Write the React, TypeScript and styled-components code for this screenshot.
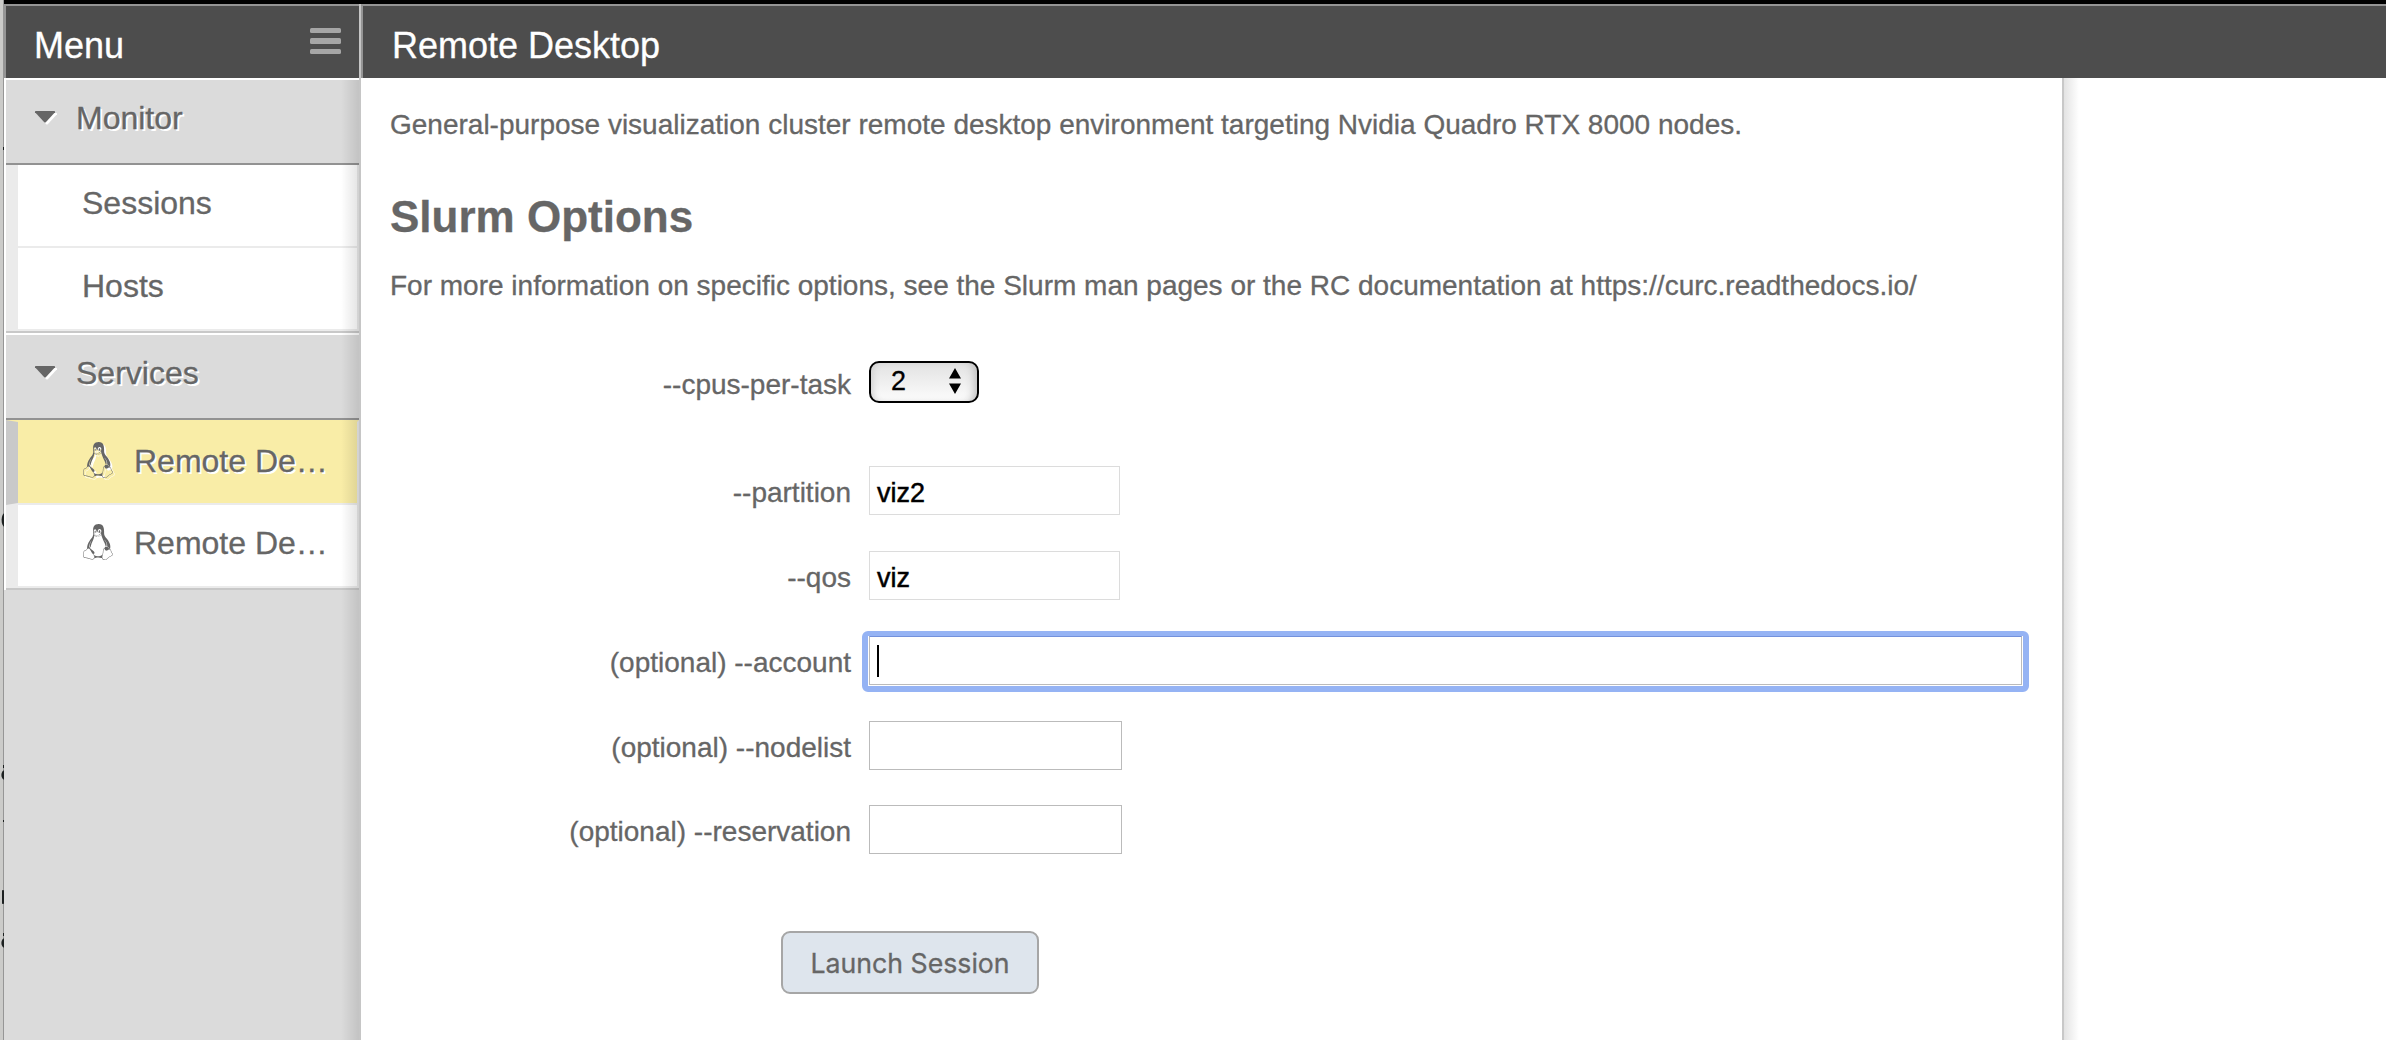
import React from "react";
import styled, { createGlobalStyle, css } from "styled-components";
import { FaLinux } from "react-icons/fa";

const GlobalStyle = createGlobalStyle`
  * { box-sizing: border-box; }
  body {
    margin: 0;
    background: #fff;
    color: #666;
    font-family: "Liberation Sans", Arial, sans-serif;
    -webkit-text-stroke: 0.3px currentColor;
  }
`;

const Page = styled.div`
  display: flex;
  width: 2386px;
  height: 1040px;
  overflow: hidden;
  background: #fff;
`;

const Edge = styled.div`
  flex: none;
  width: 4px;
  background: linear-gradient(90deg, #cbcbc9 0, #cbcbc9 3px, #969696 3px);
  svg { display: block; }
`;

const Window = styled.div`
  flex: 1;
  display: flex;
  border-top: 4px solid #000;
`;

const Sidebar = styled.nav`
  flex: none;
  width: 357px;
  position: relative;
  background: #dbdbdb;
  border-right: 2px solid #c6c6c6;
`;

const SideShade = styled.div`
  position: absolute;
  top: 76px;
  right: 0;
  bottom: 0;
  width: 18px;
  background: linear-gradient(90deg, rgba(0, 0, 0, 0), rgba(0, 0, 0, 0.11));
`;

const Bar = styled.header`
  height: 74px;
  display: flex;
  align-items: center;
  justify-content: space-between;
  background: #4d4d4d;
  border-top: 2px solid #959595;
  border-left: 2px solid #959595;
  color: #fff;
  font-size: 36px;
  line-height: 40px;
`;

const MenuBar = styled(Bar)`
  padding: 7px 18px 0 28px;
`;

const TitleBar = styled(Bar)`
  padding: 7px 0 0 29px;
`;

const Burger = styled.div`
  display: flex;
  flex-direction: column;
  gap: 5px;
  margin-bottom: 9px;
`;

const BurgerLine = styled.div`
  width: 31px;
  height: 5.5px;
  border-radius: 1.5px;
  background: #a6a6a6;
`;

const Groups = styled.div`
  border-left: 2px solid #fff;
`;

const GroupHead = styled.div`
  height: 87px;
  display: flex;
  align-items: center;
  padding: 0 0 8px 28px;
  border-top: 2px solid #fff;
  border-bottom: 2px solid #929292;
  font-size: 32px;
  line-height: 36px;
  text-shadow: 2px 2px 0 #fff;
  svg {
    flex: none;
    margin: 0 20px 1px 0;
    filter: drop-shadow(2px 2px 0 #fff);
  }
`;

const Items = styled.div`
  background: #ebebeb;
  border-bottom: 2px solid #c8c8c8;
  padding-bottom: 2px;
  display: flex;
  flex-direction: column;
`;

const Item = styled.div<{ $active?: boolean; $last?: boolean }>`
  height: ${(p) => (p.$last ? 81 : 83)}px;
  display: flex;
  align-items: center;
  border-left: 12px solid #ebebeb;
  border-right: 2px solid #ebebeb;
  border-bottom: ${(p) => (p.$last ? 0 : 2)}px solid #ebebeb;
  background: #fff;
  padding: 0 0 5px 64px;
  font-size: 32px;
  line-height: 36px;
  white-space: nowrap;
  ${(p) =>
    p.$active &&
    css`
      height: 85px;
      background: #f9eda7;
      border-top: 2px solid #f9eda7;
      border-left-color: #c9c9c9;
      padding-bottom: 3px;
      text-shadow: 2px 2px 0 #fff;
    `}
`;

const Tux = styled(FaLinux)<{ $glow?: boolean }>`
  flex: none;
  width: 32px;
  height: 36px;
  margin: 0 20px 3px 0;
  ${(p) => p.$glow && "filter: drop-shadow(2px 2px 0 #fff);"}
`;

const Main = styled.main`
  flex: 1;
  display: flex;
  flex-direction: column;
`;

const Body = styled.div`
  flex: 1;
  display: flex;
`;

const Content = styled.section`
  flex: none;
  width: 1703px;
  border-right: 2px solid #c8c8c8;
  background: #fff;
  padding: 27px 0 0 29px;
`;

const EdgeShade = styled.div`
  flex: none;
  width: 15px;
  background: linear-gradient(90deg, #e3e3e3, #fff);
`;

const Para = styled.p`
  margin: 0;
  font-size: 28px;
  line-height: 40px;
  white-space: nowrap;
`;

const Heading = styled.h2`
  margin: 46px 0 23px;
  font-size: 44px;
  line-height: 52px;
  font-weight: 700;
`;

const Form = styled.form`
  display: flex;
  flex-direction: column;
  padding-top: 55px;
`;

const Row = styled.div<{ $height: number }>`
  height: ${(p) => p.$height}px;
  display: grid;
  grid-template-columns: 461px 1153px;
  column-gap: 18px;
  align-items: start;
`;

const Label = styled.label<{ $top?: number }>`
  padding-top: ${(p) => p.$top ?? 7}px;
  text-align: right;
  font-size: 28px;
  line-height: 40px;
  white-space: nowrap;
`;

const Select = styled.div`
  width: 110px;
  height: 42px;
  display: flex;
  align-items: center;
  justify-content: space-between;
  padding: 0 16px 2px 20px;
  border: 2px solid #000;
  border-radius: 10px;
  background: linear-gradient(#e2e2e2, #fcfcfc);
  box-shadow: inset 7px 0 7px -5px #cfcfcf, inset -7px 0 8px -4px #bdbdbd;
  color: #000;
  font-size: 27px;
  line-height: 30px;
`;

const Input = styled.div<{ $kind: "preset" | "empty" | "focus" }>`
  width: ${(p) => (p.$kind === "preset" ? 251 : p.$kind === "empty" ? 253 : 1153)}px;
  height: 49px;
  display: flex;
  align-items: center;
  padding: 4px 7px 0;
  border: 1px solid ${(p) => (p.$kind === "preset" ? "#dcdcdc" : "#bbb")};
  ${(p) => p.$kind === "focus" && "border-top-color: #7391dc; padding: 0 7px;"}
  background: #fff;
  color: #000;
  font-size: 27px;
  line-height: 30px;
  -webkit-text-stroke: 0.5px #000;
`;

const FocusRing = styled.div`
  width: 1167px;
  margin: -5px 0 0 -7px;
  border: 6px solid #95b3f4;
  border-top-width: 5px;
  border-radius: 6px;
  padding: 0 1px 1px;
  background: #fff;
`;

const Caret = styled.span`
  width: 2px;
  height: 32px;
  background: #000;
`;

const Launch = styled.button`
  width: 258px;
  height: 63px;
  margin: 77px 0 0 391px;
  padding: 0;
  border: 2px solid #a6a6a6;
  border-radius: 9px;
  background: #dee5ed;
  color: #666;
  font: 400 26.7px/32px Inter, sans-serif;
  white-space: nowrap;
`;

const Arrow = () => (
  <svg width="22" height="12" viewBox="0 0 22 12">
    <path d="M1 1.2Q.6 0 2 0H20Q21.4 0 21 1.2L12 11Q11 12 10 11Z" fill="#666" />
  </svg>
);

const Stepper = () => (
  <svg width="12" height="26" viewBox="0 0 12 26">
    <path d="M6 0L12 10.5H0ZM6 26L12 15.5H0Z" fill="#000" />
  </svg>
);

export default function App() {
  return (
    <>
      <GlobalStyle />
      <Page>
        <Edge>
          <svg width="4" height="1040" viewBox="0 0 4 1040" fill="#1c2020">
            <rect x="3" y="147" width="1" height="3" />
            <ellipse cx="5" cy="520" rx="3.4" ry="7" />
            <rect x="3" y="765" width="1" height="3" />
            <ellipse cx="5" cy="775" rx="3.6" ry="5" />
            <rect x="3" y="820" width="1" height="2" />
            <rect x="2" y="890" width="2" height="14" rx="0.8" />
            <rect x="3" y="933" width="1" height="3" />
            <ellipse cx="5" cy="943" rx="3.6" ry="5" />
          </svg>
        </Edge>
        <Window>
          <Sidebar>
            <MenuBar>
              Menu
              <Burger>
                <BurgerLine />
                <BurgerLine />
                <BurgerLine />
              </Burger>
            </MenuBar>
            <Groups>
              <GroupHead>
                <Arrow />
                Monitor
              </GroupHead>
              <Items>
                <Item>Sessions</Item>
                <Item $last>Hosts</Item>
              </Items>
              <GroupHead>
                <Arrow />
                Services
              </GroupHead>
              <Items>
                <Item $active>
                  <Tux $glow />
                  Remote De…
                </Item>
                <Item $last>
                  <Tux />
                  Remote De…
                </Item>
              </Items>
            </Groups>
            <SideShade />
          </Sidebar>
          <Main>
            <TitleBar>Remote Desktop</TitleBar>
            <Body>
              <Content>
                <Para>
                  General-purpose visualization cluster remote desktop environment targeting Nvidia Quadro RTX 8000 nodes.
                </Para>
                <Heading>Slurm Options</Heading>
                <Para>
                  For more information on specific options, see the Slurm man pages or the RC documentation at
                  https://curc.readthedocs.io/
                </Para>
                <Form>
                  <Row $height={105}>
                    <Label $top={4}>--cpus-per-task</Label>
                    <Select>
                      2
                      <Stepper />
                    </Select>
                  </Row>
                  <Row $height={85}>
                    <Label>--partition</Label>
                    <Input $kind="preset">viz2</Input>
                  </Row>
                  <Row $height={85}>
                    <Label>--qos</Label>
                    <Input $kind="preset">viz</Input>
                  </Row>
                  <Row $height={85}>
                    <Label>(optional) --account</Label>
                    <FocusRing>
                      <Input $kind="focus">
                        <Caret />
                      </Input>
                    </FocusRing>
                  </Row>
                  <Row $height={84}>
                    <Label>(optional) --nodelist</Label>
                    <Input $kind="empty" />
                  </Row>
                  <Row $height={49}>
                    <Label>(optional) --reservation</Label>
                    <Input $kind="empty" />
                  </Row>
                  <Launch type="button">Launch Session</Launch>
                </Form>
              </Content>
              <EdgeShade />
            </Body>
          </Main>
        </Window>
      </Page>
    </>
  );
}
